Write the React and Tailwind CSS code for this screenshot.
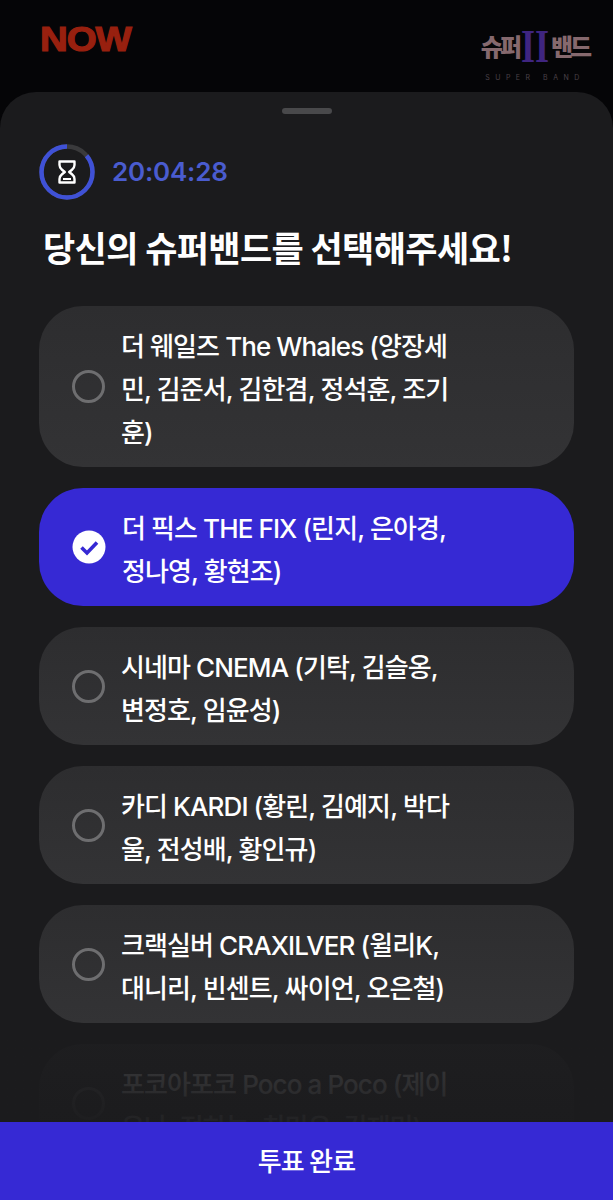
import React from "react";

const bands = [
  { id: 1, lines: ["더 웨일즈 The Whales (양장세", "민, 김준서, 김한겸, 정석훈, 조기", "훈)"] },
  { id: 2, lines: ["더 픽스 THE FIX (린지, 은아경,", "정나영, 황현조)"], selected: true },
  { id: 3, lines: ["시네마 CNEMA (기탁, 김슬옹,", "변정호, 임윤성)"] },
  { id: 4, lines: ["카디 KARDI (황린, 김예지, 박다", "울, 전성배, 황인규)"] },
  { id: 5, lines: ["크랙실버 CRAXILVER (윌리K,", "대니리, 빈센트, 싸이언, 오은철)"] },
  { id: 6, lines: ["포코아포코 Poco a Poco (제이", "유나, 정하늘, 최민우, 김재민)"] },
];

const TimerRing = () => (
  <svg width="56" height="56" viewBox="0 0 56 56" className="shrink-0">
    <circle cx="28" cy="28" r="25.5" fill="none" stroke="#3a3a3c" strokeWidth="4.5" />
    <circle
      cx="28"
      cy="28"
      r="25.5"
      fill="none"
      stroke="#3f51d6"
      strokeWidth="4.5"
      strokeDasharray="137 160.2"
      transform="rotate(-90 28 28) scale(1 -1) translate(0 -56)"
    />
    <path
      d="M20.5 17.500h15v3.500c0 2.200-1 3.500-2.500 4.700l-2.800 2.300 2.800 2.300c1.500 1.200 2.500 2.500 2.500 4.700v3.500h-15v-3.500c0-2.200 1-3.500 2.500-4.700l2.800-2.300-2.800-2.300c-1.500-1.200-2.500-2.500-2.500-4.700z"
      fill="none"
      stroke="#fff"
      strokeWidth="2.400"
      strokeLinejoin="round"
    />
    <path d="M24 35h8" stroke="#fff" strokeWidth="2" />
  </svg>
);

const Radio = ({ selected }) =>
  selected ? (
    <svg width="34" height="34" viewBox="0 0 34 34" className="shrink-0">
      <circle cx="17" cy="17" r="16.500" fill="#fff" />
      <path d="M9.500 17.500l5.500 5.500 10-10.500" fill="none" stroke="#3629d4" strokeWidth="3.600" />
    </svg>
  ) : (
    <div className="w-[33px] h-[33px] shrink-0 rounded-full border-[3px] border-[#6e6e70]" />
  );

const App = () => {
  return (
    <div className="w-[613px] h-[1200px] overflow-hidden flex flex-col bg-[#050507] text-white font-['Inter','Noto_Sans_CJK_KR',sans-serif]">
      <div className="h-[92px] shrink-0 flex items-start justify-between pl-[40px] pr-[22px]">
        <span className="mt-[18px] text-[35px] leading-[42px] font-black tracking-[-1px] text-[#98200f] [-webkit-text-stroke:1.2px_#98200f] font-['Liberation_Sans',sans-serif] scale-x-[1.1] origin-left">
          NOW
        </span>
        <div className="mt-[26px] w-[112px] flex flex-col items-center">
          <div className="flex items-center justify-center h-[39px] text-[#86696e] whitespace-nowrap font-['Noto_Sans_CJK_KR',sans-serif]">
            <span className="text-[24px] leading-none font-black tracking-[-3px]">슈퍼</span>
            <span className="mx-[2px] text-[36px] leading-none font-bold text-[#3f2580] font-['Liberation_Serif',serif] scale-y-[1.3]">II</span>
            <span className="text-[24px] leading-none font-black tracking-[-3px]">밴드</span>
          </div>
          <span className="mt-[9px] text-[7px] leading-[8px] tracking-[5.500px] text-[#4b4148] whitespace-nowrap">SUPER BAND</span>
        </div>
      </div>

      <div className="relative flex-1 min-h-0 flex flex-col rounded-t-[36px] bg-[#1b1b1d] overflow-hidden">
        <div className="mt-[16px] mx-auto w-[50px] h-[6px] shrink-0 rounded-full bg-[#49494b]" />

        <div className="mt-[30px] pl-[39px] flex items-center gap-[17px] shrink-0">
          <TimerRing />
          <span className="text-[26px] leading-[32px] font-semibold tracking-[-0.2px] text-[#4a5ccf]">20:04:28</span>
        </div>

        <h1 className="mt-[22px] pl-[43px] text-[35px] leading-[50px] font-bold tracking-[-0.6px] shrink-0 font-['Noto_Sans_CJK_KR',sans-serif]">
          당신의 슈퍼밴드를 선택해주세요!
        </h1>

        <div className="mt-[34px] mx-[39px] flex flex-col gap-[21px]">
          {bands.map((band) => (
            <div
              key={band.id}
              className={`flex items-center gap-[16px] pl-[33px] pr-[20px] py-[16px] rounded-[44px] ${
                band.selected ? "bg-[#3629d4]" : "bg-gradient-to-b from-[#2d2d2f] to-[#333335]"
              }`}
            >
              <Radio selected={band.selected} />
              <div className="mt-[3px] -mb-[3px] text-[26px] leading-[43px] font-medium tracking-[-0.9px] whitespace-nowrap">
                {band.lines.map((line) => (
                  <div key={line}>{line}</div>
                ))}
              </div>
            </div>
          ))}
        </div>

        <div className="absolute left-0 right-0 bottom-[78px] h-[82px] bg-gradient-to-b from-[#1b1b1d]/85 to-[#1b1b1d]/97" />

        <button className="absolute left-0 right-0 bottom-0 h-[78px] pb-[3px] bg-[#3629d4] text-[26px] font-medium tracking-[-0.8px] text-white font-['Noto_Sans_CJK_KR',sans-serif]">
          투표 완료
        </button>
      </div>
    </div>
  );
};

export default App;
